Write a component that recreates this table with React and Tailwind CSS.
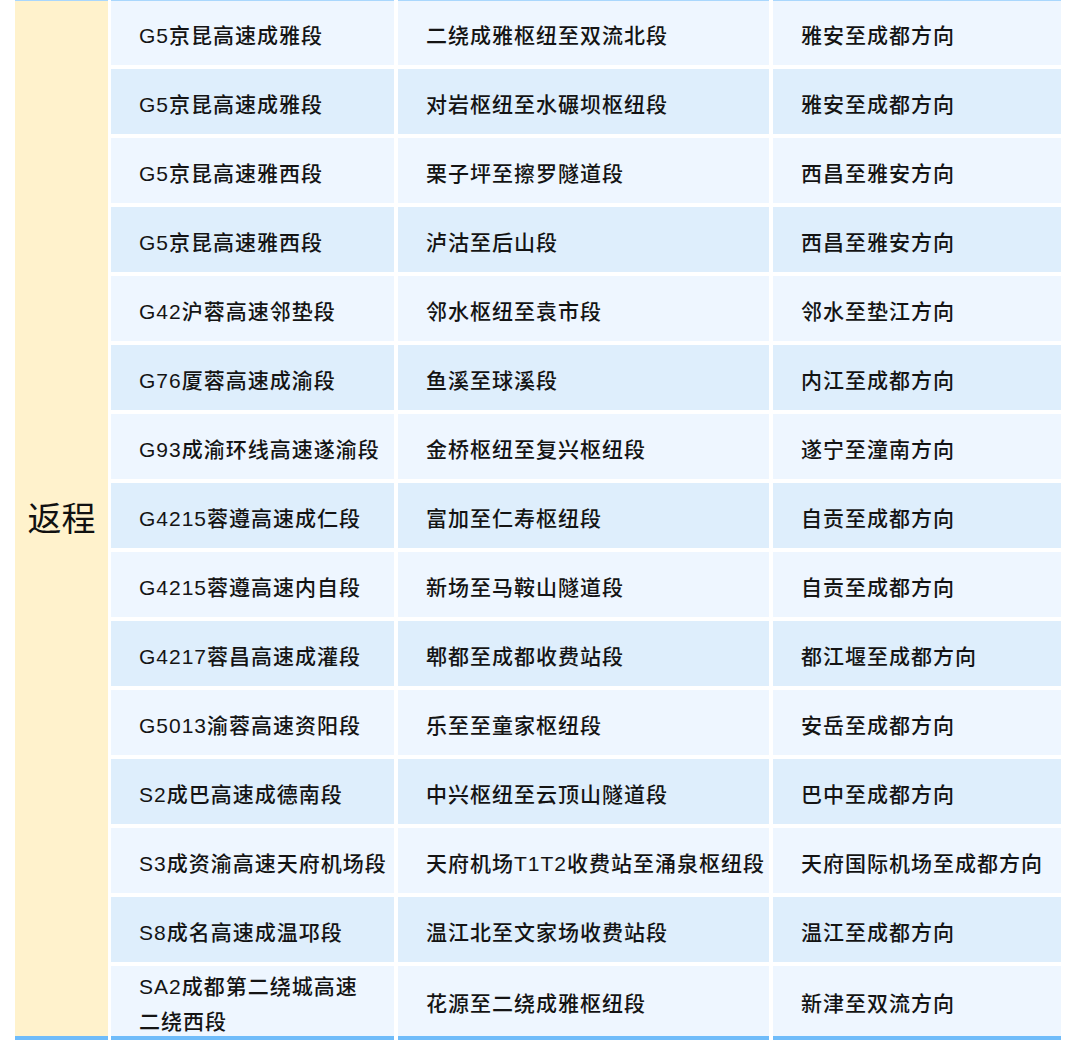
import React from "react";

const rows = [
  ["G5京昆高速成雅段", "二绕成雅枢纽至双流北段", "雅安至成都方向"],
  ["G5京昆高速成雅段", "对岩枢纽至水碾坝枢纽段", "雅安至成都方向"],
  ["G5京昆高速雅西段", "栗子坪至擦罗隧道段", "西昌至雅安方向"],
  ["G5京昆高速雅西段", "泸沽至后山段", "西昌至雅安方向"],
  ["G42沪蓉高速邻垫段", "邻水枢纽至袁市段", "邻水至垫江方向"],
  ["G76厦蓉高速成渝段", "鱼溪至球溪段", "内江至成都方向"],
  ["G93成渝环线高速遂渝段", "金桥枢纽至复兴枢纽段", "遂宁至潼南方向"],
  ["G4215蓉遵高速成仁段", "富加至仁寿枢纽段", "自贡至成都方向"],
  ["G4215蓉遵高速内自段", "新场至马鞍山隧道段", "自贡至成都方向"],
  ["G4217蓉昌高速成灌段", "郫都至成都收费站段", "都江堰至成都方向"],
  ["G5013渝蓉高速资阳段", "乐至至童家枢纽段", "安岳至成都方向"],
  ["S2成巴高速成德南段", "中兴枢纽至云顶山隧道段", "巴中至成都方向"],
  ["S3成资渝高速天府机场段", "天府机场T1T2收费站至涌泉枢纽段", "天府国际机场至成都方向"],
  ["S8成名高速成温邛段", "温江北至文家场收费站段", "温江至成都方向"],
  [["SA2成都第二绕城高速", "二绕西段"], "花源至二绕成雅枢纽段", "新津至双流方向"],
];

const font = { fontFamily: '"Liberation Sans", "Noto Sans CJK SC", sans-serif' };

function Cell({ children, bg, first, last }) {
  return (
    <div
      className={
        "flex h-[65px] items-center whitespace-nowrap pl-[28px] pt-[5px] text-[21px] font-medium leading-[35px] tracking-[1px] text-[#141414] " +
        bg +
        (first ? " border-t border-[#a9d7fd]" : "") +
        (last ? " box-content border-b-4 border-[#6fbcfa]" : "")
      }
    >
      {children}
    </div>
  );
}

export default function App() {
  return (
    <div className="h-[1052px] w-[1080px] bg-white" style={font}>
      <div className="flex gap-x-[3px] pl-[15px]">
        <div className="flex w-[93px] items-center justify-center border-t border-b-4 border-t-[#a9d7fd] border-b-[#6fbcfa] bg-[#fff2cc] pt-[2px] text-[34px] text-[#111]">
          返程
        </div>
        <div className="flex flex-col gap-y-[4px]">
          {rows.map((r, i) => {
            const bg = i % 2 === 0 ? "bg-[#eef6ff]" : "bg-[#deeefc]";
            const first = i === 0;
            const last = i === rows.length - 1;
            return (
              <div key={i} className="grid grid-cols-[283px_371px_288px] gap-x-[4px]">
                <Cell bg={bg} first={first} last={last}>
                  {Array.isArray(r[0]) ? (
                    <span>
                      {r[0][0]}
                      <br />
                      {r[0][1]}
                    </span>
                  ) : (
                    r[0]
                  )}
                </Cell>
                <Cell bg={bg} first={first} last={last}>{r[1]}</Cell>
                <Cell bg={bg} first={first} last={last}>{r[2]}</Cell>
              </div>
            );
          })}
        </div>
      </div>
    </div>
  );
}
